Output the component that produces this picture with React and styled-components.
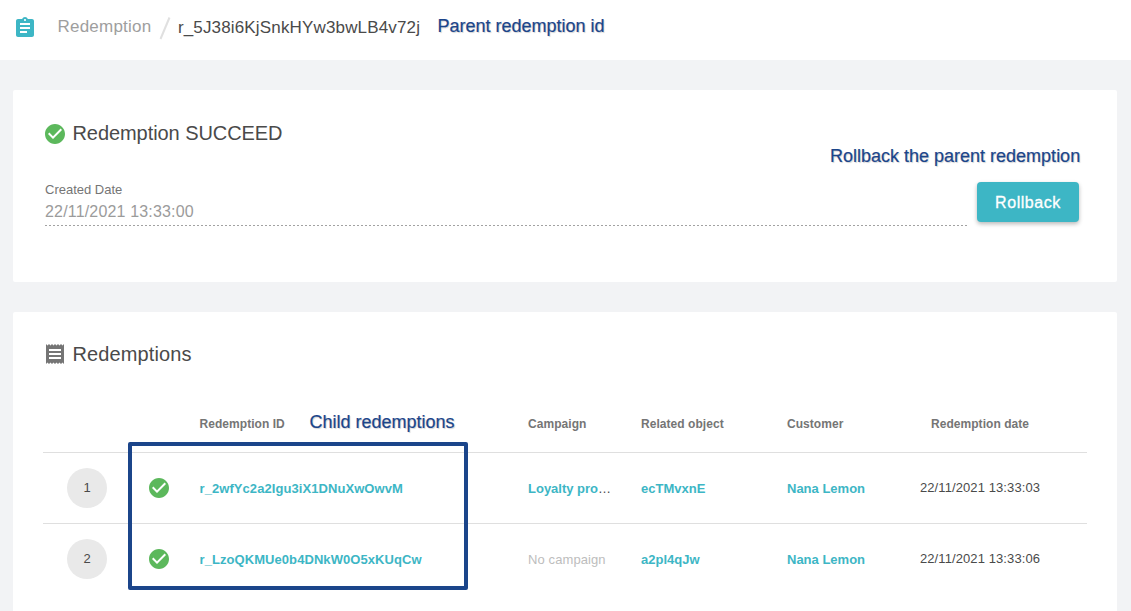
import React from 'react';
import styled, { createGlobalStyle } from 'styled-components';
import { MdAssignment, MdCheckCircle, MdReceipt } from 'react-icons/md';

const GlobalStyle = createGlobalStyle`
  * { box-sizing: border-box; }
  body {
    margin: 0;
    background: #f2f3f5;
    color: #4a4a4a;
    font-family: "Liberation Sans", Arial, sans-serif;
    overflow: hidden;
  }
`;

const Page = styled.div`
  position: relative;
  height: 611px;
  overflow: hidden;
`;

const TopBar = styled.header`
  display: flex;
  align-items: center;
  height: 60px;
  padding: 0 13px 5px;
  background: #fff;
  font-size: 17px;
  line-height: 20px;
  svg { flex: none; color: #3db6c5; }
`;

const Crumb = styled.span`
  margin-left: ${(p) => (p.$current ? '6.5px' : '20.5px')};
  padding-top: ${(p) => (p.$current ? '1px' : '0')};
  padding-bottom: ${(p) => (p.$current ? '0' : '2px')};
  color: ${(p) => (p.$current ? '#4a4a4a' : '#9e9e9e')};
  letter-spacing: ${(p) => (p.$current ? '0.16px' : '0.22px')};
`;

const Slash = styled.svg`
  margin-left: 8px;
`;

const Content = styled.main`
  display: flex;
  flex-direction: column;
  gap: 30px;
  padding: 30px 14px 0 13px;
`;

const Card = styled.section`
  height: ${(p) => p.$height}px;
  padding: ${(p) => p.$top}px 30px 0;
  background: #fff;
  border-radius: 2px;
`;

const CardTitle = styled.h2`
  display: flex;
  align-items: center;
  gap: 5.5px;
  height: 28px;
  margin: 0;
  font-size: 20px;
  font-weight: 400;
  letter-spacing: ${(p) => p.$tracking}px;
  svg { color: ${(p) => p.$icon}; }
`;

const TitleText = styled.span`
  padding-bottom: ${(p) => p.$lift}px;
`;

const DetailRow = styled.div`
  display: flex;
  justify-content: space-between;
  align-items: flex-end;
  margin-top: 34px;
  padding: 0 8px 0 2px;
  height: 40px;
`;

const Field = styled.div`
  width: 922px;
  height: 44px;
  margin-bottom: -4px;
  background: repeating-linear-gradient(90deg, #a2a2a2 0 2px, transparent 2px 4px) bottom / 100% 1px no-repeat;
`;

const Label = styled.div`
  font-size: 13px;
  line-height: 16px;
  color: #757575;
`;

const Value = styled.div`
  margin-top: 5px;
  font-size: 16px;
  line-height: 18px;
  letter-spacing: 0.17px;
  color: #9b9b9b;
`;

const Button = styled.button`
  width: 102px;
  height: 40px;
  padding: 2px 0 0;
  border: 0;
  border-radius: 4px;
  background: #3db6c5;
  box-shadow: 0 2px 4px rgba(0, 0, 0, 0.28);
  color: #fff;
  font-family: inherit;
  font-size: 16px;
  letter-spacing: 0.55px;
  -webkit-text-stroke: 0.3px #fff;
`;

const Table = styled.div`
  margin-top: 44px;
`;

const Row = styled.div`
  display: grid;
  grid-template-columns: 88px 68.5px 328.5px 113px 146px 123px 1fr;
  align-items: center;
  height: ${(p) => (p.$head ? '40px' : '71px')};
  padding-bottom: ${(p) => (p.$head ? '0' : '1px')};
  border-top: ${(p) => (p.$head ? '0' : '1px solid #dfdfdf')};
`;

const HeadCell = styled.div`
  margin-top: -17px;
  font-size: 12px;
  line-height: 14px;
  font-weight: 700;
  letter-spacing: 0.05px;
  color: #757575;
  text-align: ${(p) => (p.$center ? 'center' : 'left')};
  padding-right: ${(p) => (p.$center ? '37px' : '0')};
`;

const Cell = styled.div`
  font-size: 13px;
  line-height: 16px;
  letter-spacing: 0.1px;
  text-align: ${(p) => (p.$center ? 'center' : 'left')};
  padding-right: ${(p) => (p.$center ? '37px' : '0')};
`;

const Ordinal = styled.div`
  display: flex;
  align-items: center;
  justify-content: center;
  width: 40px;
  height: 40px;
  margin-left: 24px;
  border-radius: 50%;
  background: #e9e9e9;
  font-size: 13px;
`;

const Status = styled.div`
  display: flex;
  padding-left: 16px;
  color: #5cb85c;
`;

const Link = styled.div`
  padding-top: 2px;
  font-size: 13px;
  line-height: 16px;
  font-weight: 700;
  letter-spacing: ${(p) => (p.$wide ? '0.07px' : '0')};
  color: #3db6c5;
`;

const Ellipsis = styled.span`
  color: #4a4a4a;
  font-weight: 400;
`;

const Muted = styled.div`
  padding-top: 2px;
  font-size: 13px;
  line-height: 16px;
  letter-spacing: 0.1px;
  color: #bdbdbd;
`;

const Note = styled.div`
  position: absolute;
  left: ${(p) => p.$x}px;
  top: ${(p) => p.$y}px;
  font-size: 18px;
  line-height: 20px;
  white-space: nowrap;
  color: #1b458a;
  -webkit-text-stroke: 0.2px #1b458a;
  text-shadow: 1px 1px 1px rgba(0, 0, 0, 0.18);
`;

const Highlight = styled.div`
  position: absolute;
  left: 128px;
  top: 442px;
  width: 340px;
  height: 148px;
  border: 4px solid #1b458a;
  border-radius: 2px;
`;

const rows = [
  { id: 'r_2wfYc2a2Igu3iX1DNuXwOwvM', campaign: 'Loyalty pro', object: 'ecTMvxnE', customer: 'Nana Lemon', date: '22/11/2021 13:33:03' },
  { id: 'r_LzoQKMUe0b4DNkW0O5xKUqCw', campaign: null, object: 'a2pl4qJw', customer: 'Nana Lemon', date: '22/11/2021 13:33:06' },
];

export default function App() {
  return (
    <Page>
      <GlobalStyle />
      <TopBar>
        <MdAssignment size={24} />
        <Crumb>Redemption</Crumb>
        <Slash width="12" height="24" viewBox="0 0 12 24">
          <path d="M10.5 1.5L1.5 23" stroke="#e0e0e0" strokeWidth="2" fill="none" />
        </Slash>
        <Crumb $current>r_5J38i6KjSnkHYw3bwLB4v72j</Crumb>
      </TopBar>
      <Content>
        <Card $height={192} $top={30}>
          <CardTitle $icon="#5cb85c" $tracking={-0.07}>
            <MdCheckCircle size={24} />
            <TitleText $lift={2}>Redemption SUCCEED</TitleText>
          </CardTitle>
          <DetailRow>
            <Field>
              <Label>Created Date</Label>
              <Value>22/11/2021 13:33:00</Value>
            </Field>
            <Button>Rollback</Button>
          </DetailRow>
        </Card>
        <Card $height={320} $top={28}>
          <CardTitle $icon="#757575" $tracking={0.12}>
            <MdReceipt size={24} />
            <TitleText $lift={0}>Redemptions</TitleText>
          </CardTitle>
          <Table>
            <Row $head>
              <span />
              <span />
              <HeadCell>Redemption ID</HeadCell>
              <HeadCell>Campaign</HeadCell>
              <HeadCell>Related object</HeadCell>
              <HeadCell>Customer</HeadCell>
              <HeadCell $center>Redemption date</HeadCell>
            </Row>
            {rows.map((r, i) => (
              <Row key={r.id}>
                <Ordinal>{i + 1}</Ordinal>
                <Status><MdCheckCircle size={24} /></Status>
                <Link $wide>{r.id}</Link>
                {r.campaign ? <Link>{r.campaign}<Ellipsis>…</Ellipsis></Link> : <Muted>No campaign</Muted>}
                <Link>{r.object}</Link>
                <Link>{r.customer}</Link>
                <Cell $center>{r.date}</Cell>
              </Row>
            ))}
          </Table>
        </Card>
      </Content>
      <Note $x={437.5} $y={16}>Parent redemption id</Note>
      <Note $x={830} $y={146}>Rollback the parent redemption</Note>
      <Note $x={309.5} $y={412}>Child redemptions</Note>
      <Highlight />
    </Page>
  );
}
